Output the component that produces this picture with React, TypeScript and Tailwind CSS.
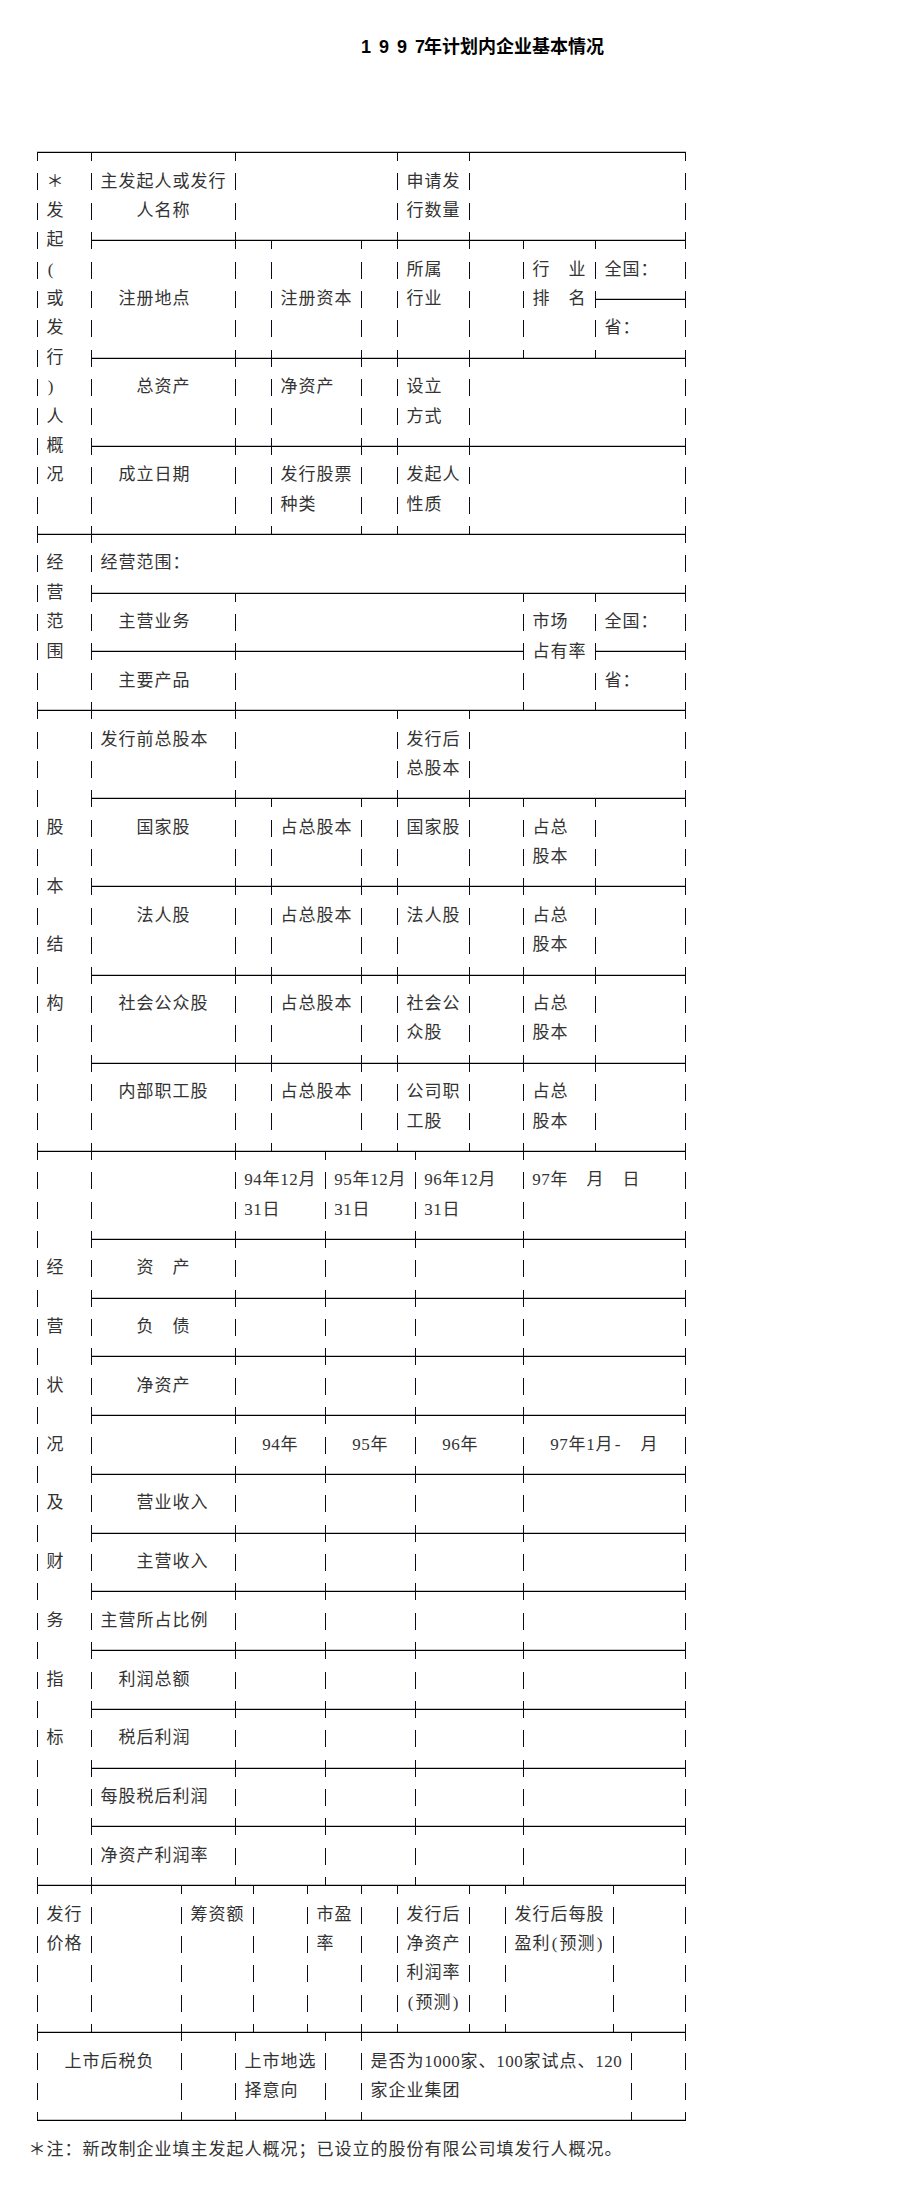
import React from "react";

const h = (n: number) => "─".repeat(n);
const s = (n: number) => "　".repeat(n);

const HL25 = "├" + h(7) + "┼" + h(1) + "┼" + h(4) + "┼" + h(1) + "┼" + h(3) + "┼" + h(2) + "┼" + h(3) + "┼" + h(4) + "┤";
const HL4 = "├" + h(7) + "┼" + h(4) + "┼" + h(4) + "┼" + h(5) + "┼" + h(8) + "┤";
const fin = (left: string, label: string) => "│" + left + "│" + label + "│" + s(4) + "│" + s(4) + "│" + s(5) + "│" + s(8) + "│";

const LINES: string[] = [
  "┌" + h(2) + "┬" + h(7) + "┬" + h(8) + "┬" + h(3) + "┬" + h(11) + "┐",
  "│＊　│主发起人或发行│" + s(8) + "│申请发│" + s(11) + "│",
  "│发　│　　人名称　　│" + s(8) + "│行数量│" + s(11) + "│",
  "│起　├" + h(7) + "┼" + h(1) + "┬" + h(4) + "┬" + h(1) + "┼" + h(3) + "┼" + h(2) + "┬" + h(3) + "┬" + h(4) + "┤",
  "│( 　│" + s(7) + "│" + s(1) + "│" + s(4) + "│" + s(1) + "│所属　│" + s(2) + "│行　业│全国：　│",
  "│或　│　注册地点　　│" + s(1) + "│注册资本│" + s(1) + "│行业　│" + s(2) + "│排　名├" + h(4) + "┤",
  "│发　│" + s(7) + "│" + s(1) + "│" + s(4) + "│" + s(1) + "│" + s(3) + "│" + s(2) + "│" + s(3) + "│省：　　│",
  "│行　├" + h(7) + "┼" + h(1) + "┼" + h(4) + "┼" + h(1) + "┼" + h(3) + "┼" + h(2) + "┴" + h(3) + "┴" + h(4) + "┤",
  "│) 　│　　总资产　　│" + s(1) + "│净资产　│" + s(1) + "│设立　│" + s(11) + "│",
  "│人　│" + s(7) + "│" + s(1) + "│" + s(4) + "│" + s(1) + "│方式　│" + s(11) + "│",
  "│概　├" + h(7) + "┼" + h(1) + "┼" + h(4) + "┼" + h(1) + "┼" + h(3) + "┼" + h(11) + "┤",
  "│况　│　成立日期　　│" + s(1) + "│发行股票│" + s(1) + "│发起人│" + s(11) + "│",
  "│　　│" + s(7) + "│" + s(1) + "│种类　　│" + s(1) + "│性质　│" + s(11) + "│",
  "├" + h(2) + "┼" + h(7) + "┴" + h(1) + "┴" + h(4) + "┴" + h(1) + "┴" + h(3) + "┴" + h(11) + "┤",
  "│经　│经营范围：" + s(27) + "│",
  "│营　├" + h(7) + "┬" + h(15) + "┬" + h(3) + "┬" + h(4) + "┤",
  "│范　│　主营业务　　│" + s(15) + "│市场　│全国：　│",
  "│围　├" + h(7) + "┼" + h(15) + "┤占有率├" + h(4) + "┤",
  "│　　│　主要产品　　│" + s(15) + "│" + s(3) + "│省：　　│",
  "├" + h(2) + "┼" + h(7) + "┼" + h(8) + "┬" + h(3) + "┬" + h(2) + "┴" + h(3) + "┴" + h(4) + "┤",
  "│　　│发行前总股本　│" + s(8) + "│发行后│" + s(11) + "│",
  "│　　│" + s(7) + "│" + s(8) + "│总股本│" + s(11) + "│",
  "│　　├" + h(7) + "┼" + h(1) + "┬" + h(4) + "┬" + h(1) + "┼" + h(3) + "┼" + h(2) + "┬" + h(3) + "┬" + h(4) + "┤",
  "│股　│　　国家股　　│　│占总股本│　│国家股│　　│占总　│　　　　│",
  "│　　│" + s(7) + "│　│" + s(4) + "│　│" + s(3) + "│　　│股本　│" + s(4) + "│",
  "│本　" + HL25,
  "│　　│　　法人股　　│　│占总股本│　│法人股│　　│占总　│　　　　│",
  "│结　│" + s(7) + "│　│" + s(4) + "│　│" + s(3) + "│　　│股本　│" + s(4) + "│",
  "│　　" + HL25,
  "│构　│　社会公众股　│　│占总股本│　│社会公│　　│占总　│　　　　│",
  "│　　│" + s(7) + "│　│" + s(4) + "│　│众股　│　　│股本　│" + s(4) + "│",
  "│　　" + HL25,
  "│　　│　内部职工股　│　│占总股本│　│公司职│　　│占总　│　　　　│",
  "│　　│" + s(7) + "│　│" + s(4) + "│　│工股　│　　│股本　│" + s(4) + "│",
  "├" + h(2) + "┼" + h(7) + "┼" + h(1) + "┴" + h(2) + "┬" + h(1) + "┴" + h(1) + "┴┬" + h(2) + "┴" + h(2) + "┼" + h(3) + "┴" + h(4) + "┤",
  "│　　│" + s(7) + "│94年12月│95年12月│96年12月　│97年　月　日　　│",
  "│　　│" + s(7) + "│31日　　│31日　　│31日　　　│" + s(8) + "│",
  "│　　" + HL4,
  fin("经　", "　　资　产　　"),
  "│　　" + HL4,
  fin("营　", "　　负　债　　"),
  "│　　" + HL4,
  fin("状　", "　　净资产　　"),
  "│　　" + HL4,
  "│况　│" + s(7) + "│　94年　│　95年　│　96年　　│　97年1月-　月　│",
  "│　　" + HL4,
  fin("及　", "　　营业收入　"),
  "│　　" + HL4,
  fin("财　", "　　主营收入　"),
  "│　　" + HL4,
  fin("务　", "主营所占比例　"),
  "│　　" + HL4,
  fin("指　", "　利润总额　　"),
  "│　　" + HL4,
  fin("标　", "　税后利润　　"),
  "│　　" + HL4,
  fin("　　", "每股税后利润　"),
  "│　　" + HL4,
  fin("　　", "净资产利润率　"),
  "├" + h(2) + "┼" + h(4) + "┬" + h(2) + "┴┬" + h(2) + "┬┴" + h(1) + "┬" + h(1) + "┬┴" + h(2) + "┬" + h(1) + "┬┴" + h(4) + "┬" + h(3) + "┤",
  "│发行│" + s(4) + "│筹资额│　　│市盈│　│发行后│　│发行后每股│" + s(3) + "│",
  "│价格│" + s(4) + "│" + s(3) + "│　　│率　│　│净资产│　│盈利(预测)│" + s(3) + "│",
  "│　　│" + s(4) + "│" + s(3) + "│　　│　　│　│利润率│　│" + s(5) + "│" + s(3) + "│",
  "│　　│" + s(4) + "│" + s(3) + "│　　│　　│　│(预测)│　│" + s(5) + "│" + s(3) + "│",
  "├" + h(2) + "┴" + h(4) + "┼" + h(2) + "┬┴" + h(2) + "┴┬" + h(1) + "┼" + h(1) + "┴" + h(3) + "┴" + h(1) + "┴" + h(5) + "┴┬" + h(2) + "┤",
  "│　上市后税负　│　　│上市地选│　│是否为1000家、100家试点、120│　　│",
  "│" + s(7) + "│　　│择意向　│　│家企业集团" + s(9) + "│　　│",
  "└" + h(7) + "┴" + h(2) + "┴" + h(4) + "┴" + h(1) + "┴" + h(14) + "┴" + h(2) + "┘",
  "＊注：新改制企业填主发起人概况；已设立的股份有限公司填发行人概况。",
];

// up, down, left, right
const BOXES: Record<string, [number, number, number, number]> = {
  "│": [1, 1, 0, 0],
  "─": [0, 0, 1, 1],
  "┌": [0, 1, 0, 1],
  "┐": [0, 1, 1, 0],
  "└": [1, 0, 0, 1],
  "┘": [1, 0, 1, 0],
  "├": [1, 1, 0, 1],
  "┤": [1, 1, 1, 0],
  "┬": [0, 1, 1, 1],
  "┴": [1, 0, 1, 1],
  "┼": [1, 1, 1, 1],
};

function Box({ ch }: { ch: string }) {
  const [u, d, l, r] = BOXES[ch];
  const x0 = l ? 0 : 9;
  const x1 = r ? 18 : 10;
  const hz = l || r;
  return (
    <svg width="18" height="29.38" className="block shrink-0" shapeRendering="crispEdges" aria-hidden="true">
      {hz ? <rect x={x0} y={14} width={x1 - x0} height={1} fill="#c4c4c4" /> : null}
      {hz ? <rect x={x0} y={15} width={x1 - x0} height={1} fill="#000000" /> : null}
      {u ? <rect x={9} y={7} width={1} height={8} fill="#0a0a1a" /> : null}
      {d ? <rect x={9} y={15} width={1} height={8.5} fill="#0a0a1a" /> : null}
    </svg>
  );
}

const isHalf = (ch: string) => ch.charCodeAt(0) < 0x100;

function Line({ text }: { text: string }) {
  return (
    <div className="flex h-[29.38px] items-center">
      {Array.from(text).map((ch, i) => {
        if (BOXES[ch]) return <Box key={i} ch={ch} />;
        const half = isHalf(ch);
        if (ch === " " || ch === "　") {
          return <span key={i} className={half ? "block h-px w-[9px] shrink-0" : "block h-px w-[18px] shrink-0"} />;
        }
        return (
          <span key={i} className={half ? "block w-[9px] shrink-0 text-center" : "block w-[18px] shrink-0 text-center"}>
            {ch}
          </span>
        );
      })}
    </div>
  );
}

const TITLE = "1 9 9 7年计划内企业基本情况";

export default function App() {
  return (
    <div className="min-h-[2201px] w-full bg-white pl-[28px] pt-[32px]">
      <div className="flex h-[30px] items-center pl-[333px] font-['Liberation_Sans','Noto_Sans_CJK_SC',sans-serif] text-[18px] font-bold leading-none text-black">
        {Array.from(TITLE).map((ch, i) =>
          ch === " " ? (
            <span key={i} className="block h-px w-[9px] shrink-0" />
          ) : (
            <span key={i} className={isHalf(ch) ? "block w-[9px] shrink-0 text-center" : "block w-[18px] shrink-0 text-center"}>
              {ch}
            </span>
          )
        )}
      </div>
      <div className="mt-[75px] font-['Liberation_Serif','Noto_Sans_CJK_SC',serif] text-[17px] leading-none text-[#333333]">
        {LINES.map((t, i) => (
          <Line key={i} text={t} />
        ))}
      </div>
    </div>
  );
}
